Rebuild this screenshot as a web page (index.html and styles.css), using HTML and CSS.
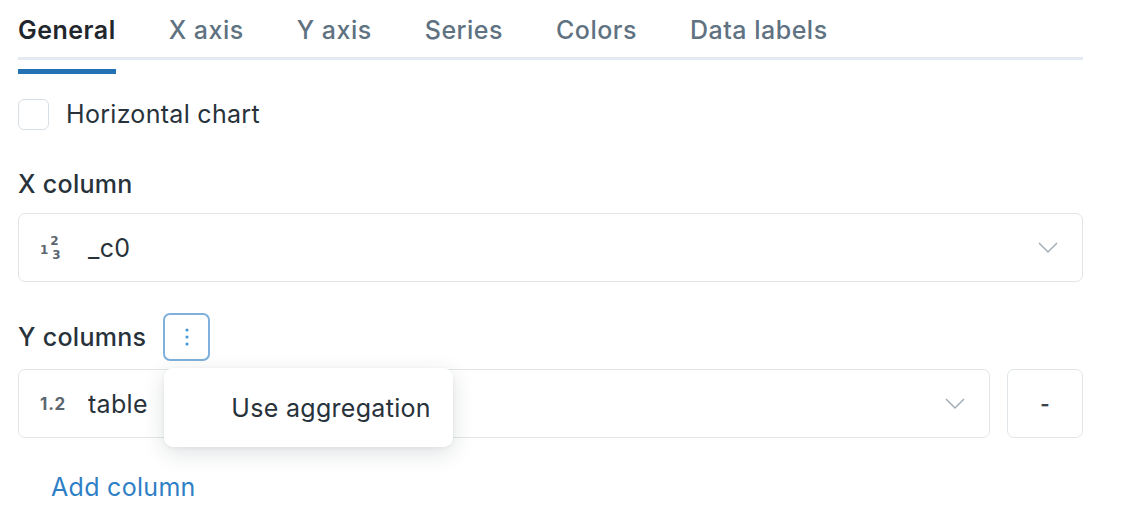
FILE: index.html
```html
<!DOCTYPE html>
<html lang="en">
<head>
<meta charset="utf-8">
<link rel="stylesheet" href="styles.css">
</head>
<body>
<div class="panel">
  <div class="tabs">
    <div class="tab active">General</div>
    <div class="tab">X axis</div>
    <div class="tab">Y axis</div>
    <div class="tab">Series</div>
    <div class="tab">Colors</div>
    <div class="tab">Data labels</div>
  </div>

  <label class="check-row">
    <span class="checkbox"></span>
    <span class="check-label">Horizontal chart</span>
  </label>

  <div class="field-label x-label">X column</div>
  <div class="select">
    <span class="type-int"><span class="one">1</span><span class="stack"><span class="sup">2</span><span class="sub">3</span></span></span>
    <span class="value">_c0</span>
    <svg class="chev" width="20" height="12" viewBox="0 0 20 12"><polyline points="1,1 10,10 19,1" fill="none" stroke="#a3adb6" stroke-width="1.5"/></svg>
  </div>

  <div class="y-head">
    <span class="field-label">Y columns</span>
    <span class="kebab-wrap">
      <button class="kebab"><svg width="4" height="18" viewBox="0 0 4 18"><circle cx="2" cy="2" r="1.6" fill="#4b98d8"/><circle cx="2" cy="9" r="1.6" fill="#4b98d8"/><circle cx="2" cy="16" r="1.6" fill="#4b98d8"/></svg></button>
      <div class="menu"><div class="menu-item">Use aggregation</div></div>
    </span>
  </div>
  <div class="y-row">
    <div class="select grow">
      <span class="type-float">1.2</span>
      <span class="value">table</span>
      <svg class="chev" width="20" height="12" viewBox="0 0 20 12"><polyline points="1,1 10,10 19,1" fill="none" stroke="#a3adb6" stroke-width="1.5"/></svg>
    </div>
    <button class="minus">-</button>
  </div>

  <a class="add-link">Add column</a>
</div>
</body>
</html>
```

FILE: styles.css
```css
* { box-sizing: border-box; }
html, body { margin: 0; padding: 0; background: #ffffff; }
body {
  font-family: Inter, "Noto Sans", "Liberation Sans", sans-serif;
  color: #28323b;
  font-size: 25px;
  letter-spacing: 0.3px;
}
.panel {
  width: 1083px;
  padding-left: 18px;
  display: flex;
  flex-direction: column;
  align-items: stretch;
}
.tabs {
  display: flex;
  gap: 53px;
  padding-top: 14px;
  box-shadow: inset 0 -3px 0 #e3eaf1;
  height: 60px;
}
.tab {
  line-height: 32px;
  height: 60px;
  padding-bottom: 14px;
  color: #5f7281;
  font-weight: 500;
  letter-spacing: 0.5px;
  border-bottom: 5px solid transparent;
}
.tab.active {
  color: #1f272d;
  font-weight: 600;
  border-bottom-color: #2272b4;
}
.check-row {
  display: flex;
  align-items: center;
  gap: 17px;
  margin-top: 38px;
  height: 32px;
}
.checkbox {
  width: 31px;
  height: 31px;
  border: 1.5px solid #d8dfe5;
  border-radius: 6px;
  background: #fff;
}
.check-label { line-height: 32px; color: #28323b; }
.field-label {
  line-height: 32px;
  font-weight: 500;
  color: #28323b;
}
.x-label { margin-top: 38px; }
.select {
  margin-top: 13px;
  height: 69px;
  border: 1.5px solid #e1e6ea;
  border-radius: 7px;
  display: flex;
  align-items: center;
  padding-left: 21px;
  padding-right: 24px;
  background: #fff;
}
.type-int {
  display: inline-flex;
  align-items: center;
  width: 48px;
  font-weight: 700;
  color: #5b6670;
  font-family: "DejaVu Sans", sans-serif;
  letter-spacing: 0;
}
.type-int .one { font-size: 12px; line-height: 14px; margin-right: 2px; margin-top: 5px; }
.type-int .stack {
  display: inline-flex;
  flex-direction: column;
  font-size: 12px;
  line-height: 14px;
}
.type-int .sub { margin-left: 2px; }
.type-float {
  width: 48px;
  font-size: 17px;
  font-weight: 700;
  letter-spacing: 0.8px;
  color: #5b6670;
}
.value { color: #28323b; }
.chev { margin-left: auto; }
.y-head {
  display: flex;
  align-items: center;
  gap: 17px;
  margin-top: 31px;
  height: 48px;
}
.kebab-wrap { position: relative; display: inline-flex; }
.kebab {
  width: 47px;
  height: 48px;
  border: 2px solid #7eb0dc;
  border-radius: 7px;
  background: #fff;
  padding: 0;
  display: flex;
  align-items: center;
  justify-content: center;
}
.menu {
  position: absolute;
  left: 1px;
  top: 55px;
  width: 289px;
  height: 79px;
  background: #fff;
  border-radius: 9px;
  box-shadow: 0 6px 22px rgba(30, 40, 50, 0.14), 0 1px 4px rgba(30, 40, 50, 0.06);
  z-index: 2;
  display: flex;
  align-items: center;
  padding-left: 67px;
}
.menu-item { color: #28323b; line-height: 32px; white-space: nowrap; }
.y-row {
  display: flex;
  gap: 17px;
  margin-top: 8px;
}
.y-row .select { margin-top: 0; }
.grow { flex: 1; }
.minus {
  width: 76px;
  height: 69px;
  border: 1.5px solid #e1e6ea;
  border-radius: 7px;
  background: #fff;
  font-family: Inter, sans-serif;
  font-size: 20px;
  font-weight: 700;
  color: #3a444d;
  padding: 0;
}
.add-link {
  margin-top: 33px;
  margin-left: 33px;
  line-height: 32px;
  color: #2f7fc6;
  align-self: flex-start;
}
```
